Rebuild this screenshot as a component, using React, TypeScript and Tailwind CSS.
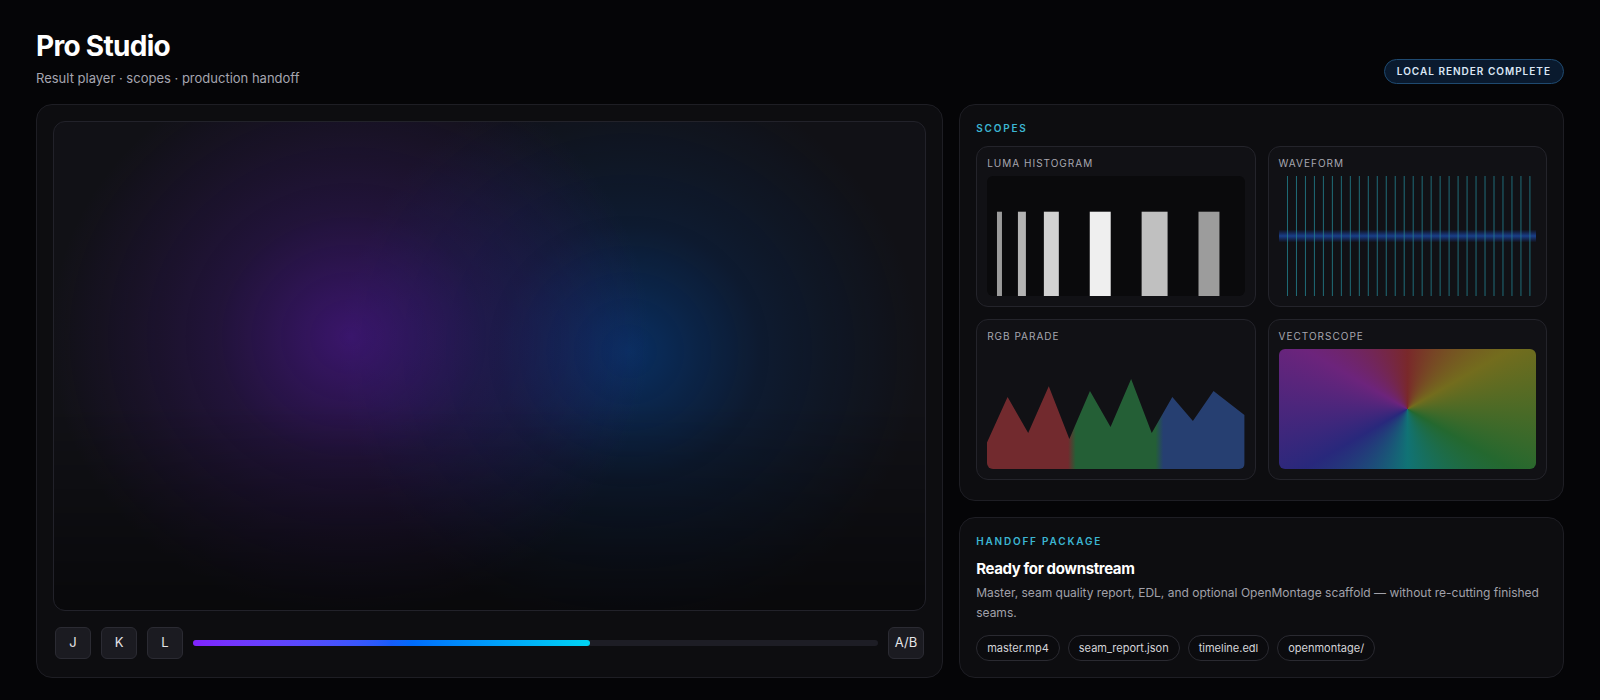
import React from "react";

const bars = [
  { x: 10, w: 5, c: "#9b9b9b" },
  { x: 31, w: 8, c: "#b3b3b3" },
  { x: 57, w: 15, c: "#d2d2d2" },
  { x: 103, w: 21, c: "#efefef" },
  { x: 155, w: 26, c: "#c0c0c0" },
  { x: 212, w: 21, c: "#9c9c9c" },
];

function ScopeCard({ title, children }: { title: string; children: React.ReactNode }) {
  return (
    <div className="rounded-xl border border-[#24242b] bg-[#111115] p-2.5">
      <div className="text-[10px] leading-[13px] tracking-[0.1em] text-[#a7a7b0] uppercase">{title}</div>
      <div className="mt-1.5 h-[120px]">{children}</div>
    </div>
  );
}

function Luma() {
  return (
    <div className="h-full w-full overflow-hidden rounded-md bg-[#0a0a0c]">
      <svg viewBox="0 0 258 121" preserveAspectRatio="none" className="block h-full w-full">
        {bars.map((b, i) => (
          <rect key={i} x={b.x} y={36} width={b.w} height={85} fill={b.c} />
        ))}
      </svg>
    </div>
  );
}

function Waveform() {
  const lines = Array.from({ length: 28 }, (_, i) => 8 + i * 9);
  return (
    <div className="h-full w-full overflow-hidden rounded-md">
      <svg viewBox="0 0 258 121" preserveAspectRatio="none" className="block h-full w-full">
        <defs>
          <linearGradient id="band" x1="0" y1="0" x2="0" y2="1">
            <stop offset="0" stopColor="#1d4ed8" stopOpacity="0" />
            <stop offset="0.5" stopColor="#1f5fd8" stopOpacity="0.6" />
            <stop offset="1" stopColor="#1d4ed8" stopOpacity="0" />
          </linearGradient>
        </defs>
        <rect x="0" y="54" width="258" height="13" fill="url(#band)" />
        {lines.map((x) => (
          <line key={x} x1={x + 0.5} y1="0" x2={x + 0.5} y2="121" stroke="#238592" strokeOpacity="0.8" strokeWidth="1" />
        ))}
      </svg>
    </div>
  );
}

function Parade() {
  return (
    <div className="h-full w-full overflow-hidden rounded-md">
      <svg viewBox="0 0 100 100" preserveAspectRatio="none" className="block h-full w-full">
        <defs>
          <linearGradient id="rgb" x1="0" y1="0" x2="1" y2="0">
            <stop offset="0" stopColor="#722a2e" />
            <stop offset="0.315" stopColor="#722a2e" />
            <stop offset="0.345" stopColor="#245f36" />
            <stop offset="0.655" stopColor="#245f36" />
            <stop offset="0.685" stopColor="#263f71" />
            <stop offset="1" stopColor="#263f71" />
          </linearGradient>
        </defs>
        <polygon
          points="0,78 8,40 16,70 24,31 32,75 40,35 48,65 56,25 64,70 72,40 80,60 88,35 100,55 100,100 0,100"
          fill="url(#rgb)"
        />
      </svg>
    </div>
  );
}

function Vectorscope() {
  return (
    <div className="h-full w-full rounded-md bg-[#111115]">
      <div className="h-full w-full rounded-md bg-[conic-gradient(from_0deg,rgba(255,70,70,0.44),rgba(240,225,40,0.44),rgba(60,215,80,0.44),rgba(16,240,240,0.44),rgba(70,70,255,0.44),rgba(225,60,255,0.44),rgba(255,70,70,0.44))]" />
    </div>
  );
}

function Key({ label }: { label: string }) {
  return (
    <button className="flex h-8 min-w-9 items-center justify-center rounded-md border border-[#2b2b33] bg-[#1b1b21] px-1.5 text-[13px] text-zinc-200">
      {label}
    </button>
  );
}

export default function App() {
  return (
    <div className="min-h-screen bg-[#050507] px-9 pt-7 pb-6 text-zinc-100 [font-family:Inter,'Liberation_Sans',sans-serif]">
      <header className="flex items-end justify-between">
        <div>
          <h1 className="text-[28px] leading-9 font-bold tracking-tight text-white">Pro Studio</h1>
          <p className="mt-1 text-[13px] leading-5 text-[#a6a6b0]">Result player · scopes · production handoff</p>
        </div>
        <div className="mb-1 flex h-[25px] items-center rounded-full border border-[#1f4a70] bg-[#0a1a2e] px-3 text-[10px] font-semibold tracking-[0.1em] text-[#dbe7f5] uppercase">
          Local render complete
        </div>
      </header>

      <main className="mt-4 grid grid-cols-[1.5fr_1fr] gap-4">
        <section className="flex flex-col rounded-2xl border border-[#1e1e24] bg-[#0d0d10] px-4 pt-4 pb-[18px]">
          <div className="flex-1 rounded-xl border border-[#22222a] bg-[#111116] [background-image:linear-gradient(to_bottom,transparent_58%,rgba(0,0,0,0.5)),radial-gradient(ellipse_300px_280px_at_34%_44%,rgba(95,25,185,0.52)_0,rgba(80,25,160,0.25)_45%,transparent_100%),radial-gradient(ellipse_290px_280px_at_66%_47%,rgba(0,75,170,0.5)_0,rgba(0,60,140,0.22)_45%,transparent_100%)]" />
          <div className="mt-4 flex items-center gap-2.5 px-0.5">
            <Key label="J" />
            <Key label="K" />
            <Key label="L" />
            <div className="h-1.5 flex-1 rounded-full bg-[#1d1d25]">
              <div className="h-full w-[58%] rounded-full bg-linear-to-r from-violet-600 via-blue-600 to-cyan-400" />
            </div>
            <Key label="A/B" />
          </div>
        </section>

        <div className="flex flex-col gap-4">
          <section className="rounded-2xl border border-[#1e1e24] bg-[#0d0d10] px-4 pt-4 pb-5">
            <div className="text-[10px] leading-[15px] font-semibold tracking-[0.18em] text-[#3cb6d3] uppercase">Scopes</div>
            <div className="mt-2.5 grid grid-cols-2 gap-3">
              <ScopeCard title="Luma histogram">
                <Luma />
              </ScopeCard>
              <ScopeCard title="Waveform">
                <Waveform />
              </ScopeCard>
              <ScopeCard title="RGB parade">
                <Parade />
              </ScopeCard>
              <ScopeCard title="Vectorscope">
                <Vectorscope />
              </ScopeCard>
            </div>
          </section>

          <section className="rounded-2xl border border-[#1e1e24] bg-[#0d0d10] p-4">
            <div className="text-[10px] leading-[15px] font-semibold tracking-[0.18em] text-[#3cb6d3] uppercase">Handoff package</div>
            <h3 className="mt-2 text-[15px] leading-6 font-bold tracking-tight text-white">Ready for downstream</h3>
            <p className="mt-0.5 text-xs leading-5 text-[#a1a1aa]">
              Master, seam quality report, EDL, and optional OpenMontage scaffold — without re-cutting finished seams.
            </p>
            <div className="mt-3 flex gap-2">
              {["master.mp4", "seam_report.json", "timeline.edl", "openmontage/"].map((c) => (
                <span key={c} className="flex h-[26px] items-center rounded-full border border-[#2a2a31] bg-[#0b0b0e] px-2.5 text-[11px] text-zinc-300">
                  {c}
                </span>
              ))}
            </div>
          </section>
        </div>
      </main>
    </div>
  );
}
